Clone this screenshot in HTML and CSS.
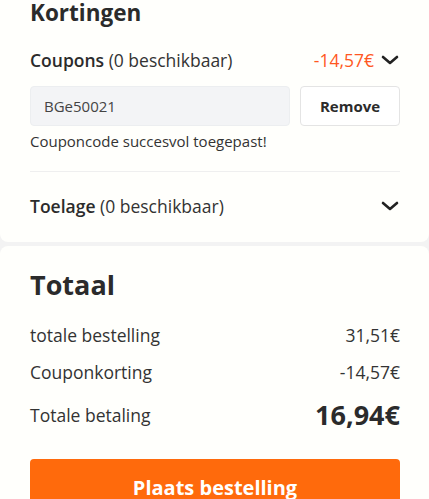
FILE: index.html
```html
<!DOCTYPE html>
<html lang="nl">
<head>
<meta charset="utf-8">
<title>Kortingen</title>
<link rel="stylesheet" href="styles.css">
</head>
<body>
<section class="card card-discounts">
  <h2 class="title">Kortingen</h2>
  <div class="row coupon-row">
    <div class="label"><strong>Coupons</strong> (0 beschikbaar)</div>
    <div class="right">
      <span class="discount">-14,57€</span>
      <svg class="chev" width="18" height="10" viewBox="0 0 18 10"><path d="M2 2 L9 8 L16 2" fill="none" stroke="#222" stroke-width="2.6" stroke-linecap="round" stroke-linejoin="round"/></svg>
    </div>
  </div>
  <div class="coupon-form">
    <div class="code-input">BGe50021</div>
    <button class="remove">Remove</button>
  </div>
  <p class="success">Couponcode succesvol toegepast!</p>
  <div class="divider"></div>
  <div class="row allowance-row">
    <div class="label"><strong>Toelage</strong> (0 beschikbaar)</div>
    <svg class="chev" width="18" height="10" viewBox="0 0 18 10"><path d="M2 2 L9 8 L16 2" fill="none" stroke="#222" stroke-width="2.6" stroke-linecap="round" stroke-linejoin="round"/></svg>
  </div>
</section>
<section class="card card-total">
  <h2 class="total-title">Totaal</h2>
  <div class="line first"><span>totale bestelling</span><span>31,51€</span></div>
  <div class="line"><span>Couponkorting</span><span>-14,57€</span></div>
  <div class="line grand"><span>Totale betaling</span><span class="grand-value">16,94€</span></div>
  <button class="order">Plaats bestelling</button>
</section>
</body>
</html>
```
FILE: styles.css
```css
* { box-sizing: border-box; }
html, body {
  margin: 0;
  padding: 0;
}
body {
  background: #f3f3f3;
  font-family: "Open Sans", "Liberation Sans", sans-serif;
  color: #333;
  overflow: hidden;
}
.card {
  background: #fffffc;
  padding: 0 29px 0 30px;
}
.card-discounts {
  border-radius: 0 0 8px 8px;
  height: 242px;
}
.card-total {
  margin-top: 4px;
  border-radius: 8px 8px 0 0;
  padding-top: 22px;
  padding-bottom: 30px;
}
.title {
  margin: 0;
  font-size: 22.5px;
  font-weight: 700;
  line-height: 26px;
  color: #2b2b2b;
}
.row {
  display: flex;
  align-items: center;
  justify-content: space-between;
}
.coupon-row {
  height: 40px;
  margin-top: 14px;
}
.label {
  font-size: 17.5px;
  color: #333;
}
.label strong {
  font-weight: 600;
  color: #2b2b2b;
}
.right {
  display: flex;
  align-items: center;
  gap: 7px;
}
.discount {
  color: #ff5722;
  font-size: 17.5px;
}
.chev {
  display: block;
  margin-right: 1px;
}
.coupon-form {
  display: flex;
  gap: 10px;
  margin-top: 6px;
}
.code-input {
  flex: 1;
  height: 40px;
  background: #f3f4f6;
  border: 1px solid #eceef0;
  border-radius: 4px;
  padding: 0 13px;
  display: flex;
  align-items: center;
  font-size: 15px;
  color: #444;
}
.remove {
  width: 100px;
  height: 40px;
  background: #fff;
  border: 1px solid #e4e4e4;
  border-radius: 4px;
  font-family: inherit;
  font-size: 15px;
  font-weight: 700;
  color: #2b2b2b;
  padding: 0;
}
.success {
  margin: 5px 0 0;
  font-size: 15px;
  line-height: 20px;
  color: #333;
}
.divider {
  height: 1px;
  background: #efefef;
  margin-top: 20px;
}
.allowance-row {
  height: 40px;
  margin-top: 14px;
}
.total-title {
  margin: 0;
  font-size: 27px;
  font-weight: 700;
  line-height: 34px;
  color: #2b2b2b;
}
.line {
  display: flex;
  justify-content: space-between;
  align-items: center;
  font-size: 17.5px;
  color: #333;
  height: 37px;
}
.line.first {
  margin-top: 14px;
}
.grand {
  height: 49px;
}
.grand-value {
  font-size: 27px;
  font-weight: 700;
  color: #2b2b2b;
}
.order {
  display: block;
  width: 100%;
  height: 56px;
  margin-top: 20px;
  background: #ff6a0c;
  border: none;
  border-radius: 4px;
  color: #fff;
  font-family: inherit;
  font-size: 20px;
  font-weight: 700;
}
```
